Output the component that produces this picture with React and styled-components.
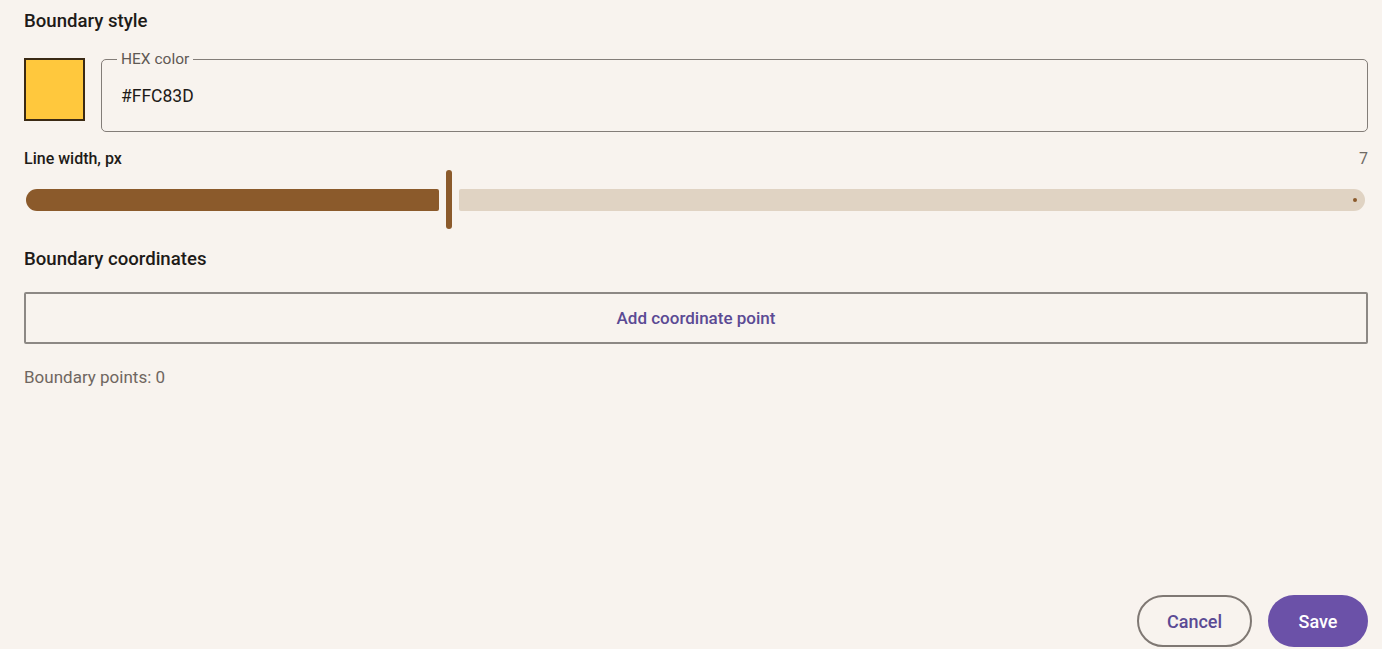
import React, { useState } from "react";
import styled, { createGlobalStyle } from "styled-components";

const GlobalStyle = createGlobalStyle`
    html, body {
        margin: 0;
        padding: 0;
        background: #f8f3ee;
    }
    body {
        font-family: Roboto, "Noto Sans", "Liberation Sans", sans-serif;
        color: #1e1b18;
    }
    * {
        box-sizing: border-box;
    }
`;

const Page = styled.div`
    min-height: 100vh;
    display: flex;
    flex-direction: column;
    padding: 9px 14px 2px 24px;
`;

const SectionTitle = styled.div`
    font-size: 18.6px;
    font-weight: 500;
    line-height: 24px;
    margin-top: ${(p) => p.$gap || 0}px;
`;

const ColorRow = styled.div`
    display: flex;
    align-items: flex-start;
    gap: 16px;
    margin-top: 18px;
`;

const Swatch = styled.div`
    width: 61px;
    height: 63px;
    margin-top: 7px;
    flex: none;
    background: ${(p) => p.$color};
    border: 2px solid #3b2a14;
`;

const Field = styled.fieldset`
    flex: 1;
    margin: 0;
    padding: 0 15px;
    border: 1.5px solid #837d78;
    border-radius: 5px;
    min-width: 0;
`;

const Legend = styled.legend`
    padding: 0 4px;
    font-size: 15.5px;
    line-height: 16px;
    color: #5f5954;
`;

const FieldValue = styled.input`
    display: block;
    width: 100%;
    border: none;
    outline: none;
    background: transparent;
    font: inherit;
    font-size: 17.5px;
    line-height: 24px;
    color: #1e1b18;
    padding: 17px 4px 23px;
`;

const LabelRow = styled.div`
    display: flex;
    justify-content: space-between;
    align-items: center;
    margin-top: 17px;
    line-height: 20px;
    font-size: 16px;
`;

const Label = styled.span`
    font-weight: 500;
`;

const Value = styled.span`
    color: #6f6a65;
`;

const Slider = styled.div`
    display: flex;
    align-items: center;
    gap: 7px;
    height: 59px;
    margin: 1px 3px 0 2px;
`;

const Track = styled.div`
    height: 22px;
    background: ${(p) => (p.$active ? "#8b5a2b" : "#e0d3c3")};
    border-radius: ${(p) => (p.$active ? "11px 2px 2px 11px" : "2px 11px 11px 2px")};
    ${(p) => (p.$active ? "flex: none;" : "flex: 1;")}
    display: flex;
    align-items: center;
    justify-content: flex-end;
    padding-right: 8px;
`;

const Thumb = styled.div`
    width: 6px;
    height: 59px;
    border-radius: 3px;
    background: #8b5a2b;
    flex: none;
`;

const StopDot = styled.div`
    width: 4px;
    height: 4px;
    border-radius: 50%;
    background: #8b5a2b;
`;

const OutlineButton = styled.button`
    display: block;
    width: 100%;
    height: 52px;
    margin-top: 21px;
    background: transparent;
    border: 2px solid #8d8884;
    border-radius: 2px;
    font: inherit;
    font-size: 17px;
    font-weight: 500;
    color: #5b4a94;
    cursor: pointer;
`;

const Hint = styled.div`
    margin-top: 21px;
    font-size: 17px;
    line-height: 24px;
    color: #6f6660;
`;

const Footer = styled.div`
    margin-top: auto;
    display: flex;
    justify-content: flex-end;
    gap: 16px;
`;

const PillButton = styled.button`
    height: 52px;
    padding: 0;
    width: ${(p) => p.$width}px;
    border-radius: 26px;
    font: inherit;
    font-size: 18px;
    font-weight: 500;
    cursor: pointer;
    border: ${(p) => (p.$filled ? "none" : "2px solid #7f7873")};
    background: ${(p) => (p.$filled ? "#6b51a8" : "transparent")};
    color: ${(p) => (p.$filled ? "#ffffff" : "#5b4a94")};
`;

const App = () => {
    const [hex, setHex] = useState("#FFC83D");
    const lineWidth = 7;
    const points = [];

    return (
        <>
            <GlobalStyle />
            <Page>
                <SectionTitle>Boundary style</SectionTitle>
                <ColorRow>
                    <Swatch $color={hex} />
                    <Field>
                        <Legend>HEX color</Legend>
                        <FieldValue value={hex} onChange={(e) => setHex(e.target.value)} />
                    </Field>
                </ColorRow>
                <LabelRow>
                    <Label>Line width, px</Label>
                    <Value>{lineWidth}</Value>
                </LabelRow>
                <Slider>
                    <Track $active style={{ width: 413 }} />
                    <Thumb />
                    <Track>
                        <StopDot />
                    </Track>
                </Slider>
                <SectionTitle $gap={18}>Boundary coordinates</SectionTitle>
                <OutlineButton>Add coordinate point</OutlineButton>
                <Hint>Boundary points: {points.length}</Hint>
                <Footer>
                    <PillButton $width={115}>Cancel</PillButton>
                    <PillButton $filled $width={100}>Save</PillButton>
                </Footer>
            </Page>
        </>
    );
};

export default App;
